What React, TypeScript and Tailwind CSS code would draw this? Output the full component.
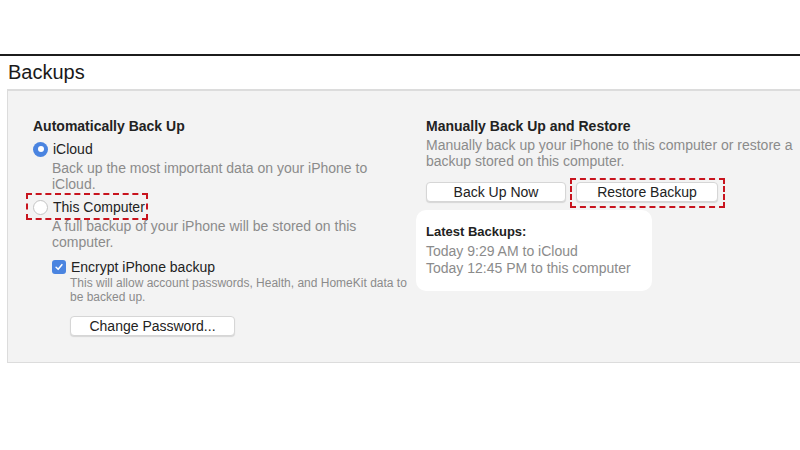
import React from 'react';

const Radio = ({ checked }: { checked?: boolean }) =>
  checked ? (
    <span className="flex h-[15px] w-[15px] shrink-0 items-center justify-center rounded-full bg-[#4a84e0]">
      <span className="h-[6px] w-[6px] rounded-full bg-white" />
    </span>
  ) : (
    <span className="h-[15px] w-[15px] shrink-0 rounded-full border border-[#c4c4c4] bg-white" />
  );

const Btn = ({ label, w }: { label: string; w: string }) => (
  <div className={`flex h-[20px] items-center justify-center rounded-[4px] border border-[#d6d6d6] bg-white text-[14px] text-[#222] shadow-[0_1px_1px_rgba(0,0,0,0.12)] ${w}`}>
    {label}
  </div>
);

export default function App() {
  return (
    <div className="h-[450px] w-[800px] overflow-hidden whitespace-nowrap bg-white font-['Liberation_Sans',Arial,sans-serif]">
      <div className="h-[54px]" />
      <div className="h-[2px] bg-[#1c1c1c]" />
      <div className="pl-[8px] pt-[3px] text-[20px] leading-[26px] text-[#1a1a1a]">Backups</div>

      <div className="ml-[7px] mt-[4px] h-[274px] border-l border-t-2 border-b border-[#dcdcdc] bg-[#f3f3f3]">
        <div className="flex pt-[26px]">
          {/* left column */}
          <div className="w-[393px] shrink-0 pl-[25px]">
            <div className="text-[14px] font-bold leading-[18px] text-[#222]">Automatically Back Up</div>

            <div className="mt-[5px] flex items-center gap-[5px]">
              <Radio checked />
              <span className="text-[14px] leading-[18px] text-[#222]">iCloud</span>
            </div>
            <div className="mt-[2px] pl-[19px] text-[14px] leading-[16px] text-[#8b8b8b]">
              Back up the most important data on your iPhone to
              <br />
              iCloud.
            </div>

            <div className="relative mt-[6px] flex items-center gap-[5px]">
              <div className="absolute -left-[7px] -top-[5px] h-[27px] w-[122px] border-2 border-dashed border-[#c8141e]" />
              <Radio />
              <span className="text-[14px] leading-[18px] text-[#222]">This Computer</span>
            </div>
            <div className="mt-[2px] pl-[19px] text-[14px] leading-[16px] text-[#8b8b8b]">
              A full backup of your iPhone will be stored on this
              <br />
              computer.
            </div>

            <div className="mt-[8px] flex items-center gap-[5px] pl-[19px]">
              <span className="flex h-[14px] w-[14px] shrink-0 items-center justify-center rounded-[3px] bg-[#4a84e0]">
                <svg viewBox="0 0 12 12" className="h-[10px] w-[10px]">
                  <path d="M2.5 6.3 L5 8.8 L9.5 3.2" fill="none" stroke="white" strokeWidth="1.8" strokeLinecap="round" strokeLinejoin="round" />
                </svg>
              </span>
              <span className="text-[14px] leading-[18px] text-[#222]">Encrypt iPhone backup</span>
            </div>
            <div className="pl-[37px] text-[12px] leading-[14px] text-[#8b8b8b]">
              This will allow account passwords, Health, and HomeKit data to
              <br />
              be backed up.
            </div>
            <div className="mt-[12px] pl-[37px]">
              <Btn label="Change Password..." w="w-[165px]" />
            </div>
          </div>

          {/* right column */}
          <div className="pl-[25px]">
            <div className="text-[14px] font-bold leading-[18px] text-[#222]">Manually Back Up and Restore</div>
            <div className="mt-[2px] text-[14px] leading-[16px] text-[#8b8b8b]">
              Manually back up your iPhone to this computer or restore a
              <br />
              backup stored on this computer.
            </div>
            <div className="mt-[13px] flex gap-[10px]">
              <Btn label="Back Up Now" w="w-[140px]" />
              <div className="relative">
                <div className="absolute -left-[6px] -top-[4px] h-[30px] w-[155px] border-2 border-dashed border-[#c8141e]" />
                <Btn label="Restore Backup" w="w-[142px]" />
              </div>
            </div>
            <div className="-ml-[10px] mt-[8px] w-[236px] rounded-[10px] bg-white pb-[14px] pl-[10px] pt-[13px]">
              <div className="text-[13px] font-bold leading-[18px] text-[#222]">Latest Backups:</div>
              <div className="mt-[2px] text-[14px] leading-[17px] text-[#8b8b8b]">
                Today 9:29 AM to iCloud
                <br />
                Today 12:45 PM to this computer
              </div>
            </div>
          </div>
        </div>
      </div>
    </div>
  );
}
